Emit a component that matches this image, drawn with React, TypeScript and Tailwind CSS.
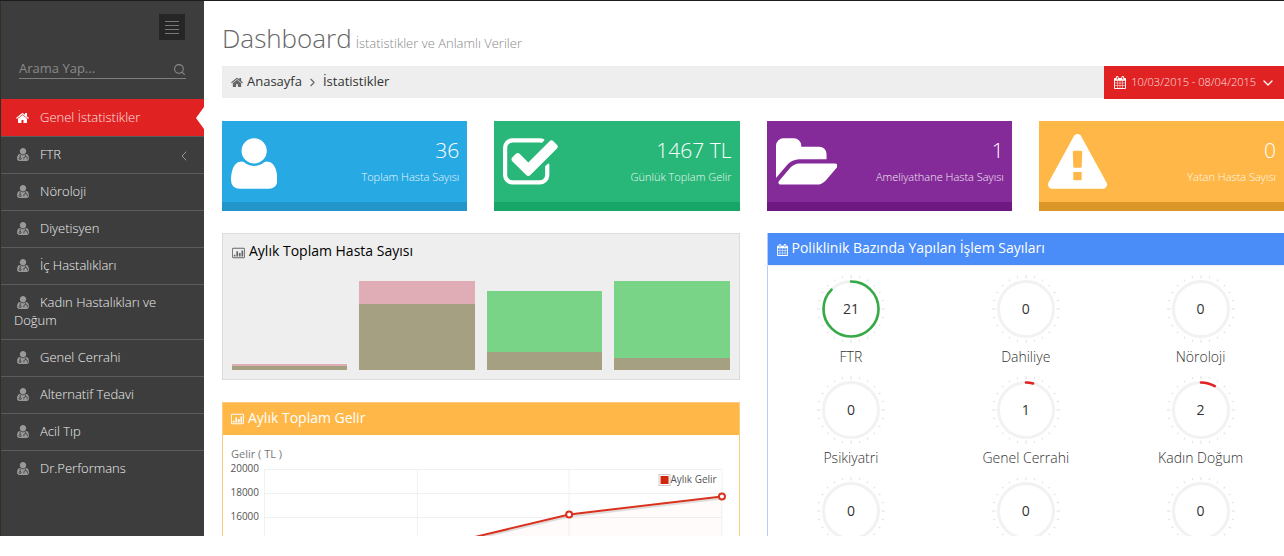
import type { ReactNode } from 'react'
import { ChevronDown, ChevronLeft, ChevronRight, Search } from 'lucide-react'

interface GlyphProps {
  name: keyof typeof glyphs
  className?: string
}

const glyphs = {
  user: {
    box: '192 0 1408 1792',
    d: 'M1600 1405q0 120-73 189.5t-194 69.5h-874q-121 0-194-69.5t-73-189.5q0-53 3.5-103.5t14-109 26.5-108.5 43-97.5 62-81 85.5-53.5 111.5-20q9 0 42 21.5t74.5 48 108 48 133.5 21.5 133.5-21.5 108-48 74.5-48 42-21.5q61 0 111.5 20t85.5 53.5 62 81 43 97.5 26.5 108.5 14 109 3.5 103.5zm-320-893q0 159-112.5 271.5t-271.5 112.5-271.5-112.5-112.5-271.5 112.5-271.5 271.5-112.5 271.5 112.5 112.5 271.5z',
  },
  check: {
    box: '64 0 1664 1792',
    d: 'M1472 930v318q0 119-84.5 203.5t-203.5 84.5h-832q-119 0-203.5-84.5t-84.5-203.5v-832q0-119 84.5-203.5t203.5-84.5h832q63 0 117 25 15 7 18 23 3 17-9 29l-49 49q-10 10-23 10-3 0-9-2-23-6-45-6h-832q-66 0-113 47t-47 113v832q0 66 47 113t113 47h832q66 0 113-47t47-113v-254q0-13 9-22l64-64q10-10 23-10 6 0 12 3 20 8 20 29zm231-489l-814 814q-24 24-57 24t-57-24l-430-430q-24-24-24-57t24-57l110-110q24-24 57-24t57 24l263 263 647-647q24-24 57-24t57 24l110 110q24 24 24 57t-24 57z',
  },
  folder: {
    box: '64 0 1880 1792',
    d: 'M1943 952q0 31-31 66l-336 396q-43 51-120.5 86.5t-143.5 35.5h-1088q-34 0-60.5-13t-26.5-43q0-31 31-66l336-396q43-51 120.5-86.5t143.5-35.5h1088q34 0 60.5 13t26.5 43zm-343-344v160h-832q-94 0-197 47.5t-164 119.5l-337 396-5 6q0-4-.5-12.5t-.5-12.5v-960q0-92 66-158t158-66h320q92 0 158 66t66 158v32h544q92 0 158 66t66 158z',
  },
  warning: {
    box: '0 0 1792 1792',
    d: 'M1024 1375v-190q0-14-9.5-23.5t-22.5-9.5h-192q-13 0-22.5 9.5t-9.5 23.5v190q0 14 9.5 23.5t22.5 9.5h192q13 0 22.5-9.5t9.5-23.5zm-2-374l18-459q0-12-10-19-13-11-24-11h-220q-11 0-24 11-10 7-10 21l17 457q0 10 10 16.5t24 6.5h185q14 0 23.5-6.5t10.5-16.5zm-14-934l768 1408q35 63-2 126-17 29-46.5 46t-63.5 17h-1536q-34 0-63.5-17t-46.5-46q-37-63-2-126l768-1408q17-31 47-49t65-18 65 18 47 49z',
  },
  home: {
    box: '64 0 1664 1792',
    d: 'M1472 992v480q0 26-19 45t-45 19h-384v-384h-256v384h-384q-26 0-45-19t-19-45v-480q0-1 .5-3t.5-3l575-474 575 474q1 2 1 6zm223-69l-62 74q-8 9-21 11h-3q-13 0-21-7l-692-577-692 577q-12 8-24 7-13-2-21-11l-62-74q-8-10-7-23.5t11-21.5l719-599q32-26 76-26t76 26l244 204v-195q0-14 9-23t23-9h192q14 0 23 9t9 23v408l219 182q10 8 11 21.5t-7 23.5z',
  },
  calendar: {
    box: '64 0 1664 1792',
    d: 'M192 1664h288v-288h-288v288zm352 0h320v-288h-320v288zm-352-352h288v-320h-288v320zm352 0h320v-320h-320v320zm-352-384h288v-288h-288v288zm736 736h320v-288h-320v288zm-384-736h320v-288h-320v288zm768 736h288v-288h-288v288zm-384-352h320v-320h-320v320zm-352-864v-288q0-13-9.5-22.5t-22.5-9.5h-64q-13 0-22.5 9.5t-9.5 22.5v288q0 13 9.5 22.5t22.5 9.5h64q13 0 22.5-9.5t9.5-22.5zm736 864h288v-320h-288v320zm-384-384h320v-288h-320v288zm384 0h288v-288h-288v288zm32-480v-288q0-13-9.5-22.5t-22.5-9.5h-64q-13 0-22.5 9.5t-9.5 22.5v288q0 13 9.5 22.5t22.5 9.5h64q13 0 22.5-9.5t9.5-22.5zm384-64v1280q0 52-38 90t-90 38h-1408q-52 0-90-38t-38-90v-1280q0-52 38-90t90-38h128v-96q0-66 47-113t113-47h64q66 0 113 47t47 113v96h384v-96q0-66 47-113t113-47h64q66 0 113 47t47 113v96h128q52 0 90 38t38 90z',
  },
  chart: {
    box: '0 0 1920 1792',
    d: 'M160 128h1600q66 0 113 47t47 113v1216q0 66-47 113t-113 47h-1600q-66 0-113-47t-47-113v-1216q0-66 47-113t113-47zm0 128q-32 0-32 32v1216q0 32 32 32h1600q32 0 32-32v-1216q0-32-32-32zM256 1152h256v256h-256zM640 640h256v768h-256zM1024 896h256v512h-256zM1408 512h256v896h-256z',
  },
}

function Glyph({ name, className }: GlyphProps) {
  return (
    <svg viewBox={glyphs[name].box} fill="currentColor" fillRule={name === 'chart' ? 'evenodd' : 'nonzero'} className={className} aria-hidden="true">
      <path d={glyphs[name].d} />
    </svg>
  )
}

function DoctorIcon() {
  return (
    <svg viewBox="192 0 1408 1792" className="inline-block h-[15px] w-3 align-[-3px] text-[#999]" aria-hidden="true">
      <path d={glyphs.user.d} fill="currentColor" />
      <g fill="none" stroke="#3d3d3d" strokeWidth="100">
        <path d="M560 930v330M1210 930v200M1000 1480v-150q0-190 210-190t210 190v150" />
        <circle cx="560" cy="1380" r="120" />
      </g>
    </svg>
  )
}

const menu = [
  { label: 'Genel İstatistikler', active: true },
  { label: 'FTR', expandable: true },
  { label: 'Nöroloji' },
  { label: 'Diyetisyen' },
  { label: 'İç Hastalıkları' },
  { label: 'Kadın Hastalıkları ve Doğum' },
  { label: 'Genel Cerrahi' },
  { label: 'Alternatif Tedavi' },
  { label: 'Acil Tıp' },
  { label: 'Dr.Performans' },
]

function Sidebar() {
  return (
    <aside className="w-[204px] shrink-0 border-l border-[#2c3325] bg-[#3d3d3d]">
      <div className="flex justify-end pt-[13px] pr-[19px]">
        <button type="button" aria-label="Menü" className="flex size-[26px] flex-col items-center justify-center gap-[3px] bg-[#262626]">
          <span className="h-px w-3.5 bg-[#777]" />
          <span className="h-px w-3.5 bg-[#777]" />
          <span className="h-px w-3.5 bg-[#777]" />
          <span className="h-px w-3.5 bg-[#777]" />
        </button>
      </div>
      <form className="mt-[18px] mr-[18px] mb-5 ml-[18px] flex h-[21px] items-center border-b border-[#7d7d7d] pt-0.5">
        <input
          type="text"
          aria-label="Arama"
          placeholder="Arama Yap..."
          className="w-full min-w-0 bg-transparent text-[13px] text-[#ccc] outline-none placeholder:text-[#8a8a8a]"
        />
        <button type="button" aria-label="Ara" className="text-[#8c8c8c]">
          <Search size={13} strokeWidth={2} />
        </button>
      </form>
      <nav>
        <ul>
          {menu.map((item) => (
            <li key={item.label} className="border-t border-[#5c5c5c] first:border-[#e02222]">
              <a
                href="#"
                className={`relative block pt-2 pr-[30px] pb-2.5 pl-[13px] text-[13px] leading-[18px] font-light ${
                  item.active ? 'bg-[#e02222] text-[#ffe0e0]' : 'text-[#eee]'
                }`}
              >
                <span className="mr-[9px] inline-block w-[17px] text-center">
                  {item.active ? <Glyph name="home" className="inline-block h-[14px] w-[13px] align-[-3px] text-white" /> : <DoctorIcon />}
                </span>
                {item.label}
                {item.active ? (
                  <svg viewBox="0 0 8 22" className="absolute top-[7px] right-0 h-[22px] w-2" aria-hidden="true">
                    <path d="M8 0v22L0 11z" fill="#fff" />
                  </svg>
                ) : null}
                {item.expandable ? <ChevronLeft size={16} strokeWidth={1.5} className="absolute top-[11px] right-3 text-[#999]" /> : null}
              </a>
            </li>
          ))}
        </ul>
      </nav>
    </aside>
  )
}

interface StatProps {
  icon: keyof typeof glyphs
  value: string
  label: string
  colors: string
}

const stats: StatProps[] = [
  { icon: 'user', value: '36', label: 'Toplam Hasta Sayısı', colors: 'bg-[#27a9e3] border-[#2295c9]' },
  { icon: 'check', value: '1467 TL', label: 'Günlük Toplam Gelir', colors: 'bg-[#28b779] border-[#17a668]' },
  { icon: 'folder', value: '1', label: 'Ameliyathane Hasta Sayısı', colors: 'bg-[#852b99] border-[#6e1881]' },
  { icon: 'warning', value: '0', label: 'Yatan Hasta Sayısı', colors: 'bg-[#ffb848] border-[#da9628]' },
]

function StatCard({ icon, value, label, colors }: StatProps) {
  return (
    <div className={`flex h-[90px] items-start justify-between border-b-[9px] pr-2 pl-[9px] text-white ${colors}`}>
      <Glyph name={icon} className="mt-[13px] h-[59px] w-auto" />
      <div className="pt-3.5 text-right font-light">
        <div className="text-[21px] leading-[30px]">{value}</div>
        <div className="mt-[3px] text-[11px] leading-[18px] whitespace-nowrap opacity-90">{label}</div>
      </div>
    </div>
  )
}

const bars = [
  { total: 'h-[6px] bg-[#e0adb6]', part: 'h-1' },
  { total: 'h-[89px] bg-[#e0adb6]', part: 'h-[66px]' },
  { total: 'h-[79px] bg-[#79d487]', part: 'h-[18px]' },
  { total: 'h-[89px] bg-[#79d487]', part: 'h-3' },
]

function PatientsPanel() {
  return (
    <section className="border border-[#dcdcdc] bg-[#eee] px-[9px] pb-[9px]">
      <h2 className="flex items-center gap-1 pt-[7px] text-[14px] leading-5 text-black">
        <Glyph name="chart" className="h-3 w-[13px] translate-y-0.5 text-[#666]" />
        Aylık Toplam Hasta Sayısı
      </h2>
      <div className="mt-5 grid h-[89px] grid-cols-4 items-end gap-3">
        {bars.map((bar, index) => (
          <div key={index} className={`flex flex-col justify-end ${bar.total}`}>
            <div className={`bg-[#a5a081] ${bar.part}`} />
          </div>
        ))}
      </div>
    </section>
  )
}

function IncomePanel() {
  return (
    <section className="mt-[22px] border border-[#fccb7e] bg-white">
      <h2 className="flex h-8 items-center gap-1 bg-[#ffb848] px-2 pb-0.5 text-[14px] leading-5 text-white">
        <Glyph name="chart" className="h-3 w-[13px] translate-y-px" />
        Aylık Toplam Gelir
      </h2>
      <div className="px-2 pt-2.5">
        <p className="text-[11px] leading-[18px] text-[#777]">Gelir ( TL )</p>
        <svg viewBox="0 0 500 110" className="block w-full overflow-visible" role="img" aria-label="Aylık gelir grafiği">
          <g fill="none" stroke="#f1f1f1">
            <path d="M33.5 6.5H491.5M33.5 30.5H491.5M33.5 54.5H491.5M33.5 79.5H491.5" />
            <path d="M33.5 6.5V110M186.5 6.5V110M338.5 6.5V110M491.5 6.5V110" />
          </g>
          <path d="M186 88L338.5 51.5L491.5 33.5V110H186z" fill="#d12610" fillOpacity="0.02" />
          <path d="M186 90L338.5 53.5L491.5 35.5" fill="none" stroke="#000" strokeOpacity="0.12" strokeWidth="2" />
          <path d="M33 104L186 88L338.5 51.5L491.5 33.5" fill="none" stroke="#d8321f" strokeWidth="2" />
          <circle cx="338.5" cy="51.5" r="3" fill="#fff" stroke="#d8321f" strokeWidth="2" />
          <circle cx="491.5" cy="33.5" r="3" fill="#fff" stroke="#d8321f" strokeWidth="2" />
          <rect x="428.5" y="11.5" width="11" height="11" fill="#fff" stroke="#ccc" />
          <rect x="430" y="13" width="8" height="8" fill="#d12610" />
          <g fill="#545454" fontSize="10">
            <text x="440" y="20">Aylık Gelir</text>
            <g textAnchor="end">
              <text x="28" y="9">20000</text>
              <text x="28" y="33">18000</text>
              <text x="28" y="57">16000</text>
            </g>
          </g>
        </svg>
      </div>
    </section>
  )
}

const TOTAL = 24
const clinics = [
  { name: 'FTR', count: 21 },
  { name: 'Dahiliye', count: 0 },
  { name: 'Nöroloji', count: 0 },
  { name: 'Psikiyatri', count: 0 },
  { name: 'Genel Cerrahi', count: 1 },
  { name: 'Kadın Doğum', count: 2 },
  { count: 0 },
  { count: 0 },
  { count: 0 },
]

function Gauge({ name, count }: { name?: string; count: number }) {
  return (
    <div className="flex h-[101px] flex-col items-center">
      <div className="grid size-[70px] place-items-center">
        <svg viewBox="-35 -35 70 70" className="col-start-1 row-start-1 size-[70px]" aria-hidden="true">
          {Array.from({ length: TOTAL }).map((_, index) => (
            <path
              key={index}
              d={index % 6 === 0 ? 'M0-34v3.5' : 'M0-34v2'}
              stroke="#dfe0e0"
              transform={`rotate(${index * 15})`}
            />
          ))}
          <circle r="27.5" fill="none" stroke="#f2f2f2" strokeWidth="3" />
          {count > 0 ? (
            <circle
              r="27.5"
              fill="none"
              stroke={count > 10 ? '#35aa47' : '#e02222'}
              strokeWidth="2.6"
              strokeLinecap="round"
              pathLength={TOTAL}
              strokeDasharray={`${count} ${TOTAL}`}
              transform="rotate(-90)"
            />
          ) : null}
        </svg>
        <span className="col-start-1 row-start-1 text-[14px] leading-5 text-[#333]">{count}</span>
      </div>
      {name ? (
        <a href="#" className="mt-[3px] text-[14px] leading-5 font-light text-[#333]">
          {name}
        </a>
      ) : null}
    </div>
  )
}

function ClinicsPanel() {
  return (
    <section className="border-l border-[#b4cef8] bg-white">
      <h2 className="flex h-8 items-center gap-1 bg-[#4b8df8] px-[9px] pb-0.5 text-[14px] leading-5 text-white">
        <Glyph name="calendar" className="h-3 w-[11px] translate-y-0.5" />
        Poliklinik Bazında Yapılan İşlem Sayıları
      </h2>
      <div className="-mx-1 grid grid-cols-3 border-t border-[#eee] pt-2">
        {clinics.map((clinic, index) => (
          <Gauge key={index} {...clinic} />
        ))}
      </div>
    </section>
  )
}

function Columns({ children }: { children: ReactNode }) {
  return <div className="mt-[22px] grid grid-cols-2 gap-[27px]">{children}</div>
}

export default function App() {
  return (
    <div className="h-screen overflow-hidden bg-white pb-5 font-['Open_Sans',sans-serif]">
      <div className="flex h-full overflow-hidden border-t border-[#1f1a1f]">
        <Sidebar />
        <main className="min-w-0 flex-1 pl-[18px]">
          <h1 className="pt-[17px] text-[26px] leading-10 font-light text-[#666]">
            Dashboard<small className="ml-1 text-[13px] leading-none text-[#888]">İstatistikler ve Anlamlı Veriler</small>
          </h1>
          <div className="mt-2 flex h-8 items-start justify-between bg-[#eee]">
            <nav className="flex h-8 items-center gap-1 pl-[9px] text-[13px] text-[#333]">
              <Glyph name="home" className="h-[13px] w-3 text-[#666]" />
              <a href="#">Anasayfa</a>
              <ChevronRight size={13} strokeWidth={2} className="text-[#666]" />
              <a href="#">İstatistikler</a>
            </nav>
            <button type="button" className="flex h-[33px] items-center bg-[#e02222] pr-2 pl-2.5 text-[11px] font-light text-[#ffe0e0]">
              <Glyph name="calendar" className="mr-[5px] h-[13px] w-3 text-white" />
              10/03/2015 - 08/04/2015
              <ChevronDown size={16} strokeWidth={2} className="ml-1 text-white" />
            </button>
          </div>
          <div className="mt-[23px] grid grid-cols-4 gap-[27px]">
            {stats.map((stat) => (
              <StatCard key={stat.label} {...stat} />
            ))}
          </div>
          <Columns>
            <div>
              <PatientsPanel />
              <IncomePanel />
            </div>
            <ClinicsPanel />
          </Columns>
        </main>
      </div>
    </div>
  )
}
